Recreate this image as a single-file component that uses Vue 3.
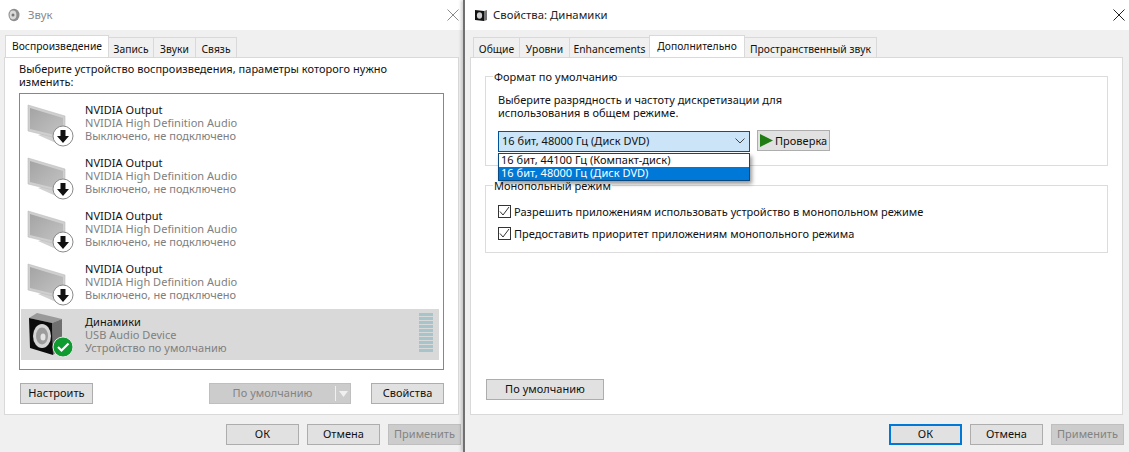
<script setup>
const leftTabs = [
  { label: 'Воспроизведение', width: 104, active: true },
  { label: 'Запись', width: 46 },
  { label: 'Звуки', width: 43 },
  { label: 'Связь', width: 42 },
]
const rightTabs = [
  { label: 'Общие', width: 47 },
  { label: 'Уровни', width: 51 },
  { label: 'Enhancements', width: 81 },
  { label: 'Дополнительно', width: 96, active: true },
  { label: 'Пространственный звук', width: 133 },
]
const devices = [
  { name: 'NVIDIA Output', sub: 'NVIDIA High Definition Audio', state: 'Выключено, не подключено' },
  { name: 'NVIDIA Output', sub: 'NVIDIA High Definition Audio', state: 'Выключено, не подключено' },
  { name: 'NVIDIA Output', sub: 'NVIDIA High Definition Audio', state: 'Выключено, не подключено' },
  { name: 'NVIDIA Output', sub: 'NVIDIA High Definition Audio', state: 'Выключено, не подключено' },
  { name: 'Динамики', sub: 'USB Audio Device', state: 'Устройство по умолчанию', selected: true },
]
const formats = ['16 бит, 44100 Гц (Компакт-диск)', '16 бит, 48000 Гц (Диск DVD)']
const checks = [
  'Разрешить приложениям использовать устройство в монопольном режиме',
  'Предоставить приоритет приложениям монопольного режима',
]
</script>

<template>
  <div class="desk">
    <section class="win win-left">
      <header class="title">
        <svg class="title-ico" width="14" height="14" viewBox="0 0 14 14">
          <ellipse cx="7" cy="7" rx="5.500" ry="6.200" fill="#8d8d8d" />
          <ellipse cx="6" cy="7" rx="3.400" ry="4.400" fill="#d9d9d9" />
          <circle cx="6" cy="7" r="1.500" fill="#777" />
        </svg>
        <span class="title-text muted">Звук</span>
        <svg class="close" width="12" height="12" viewBox="0 0 12 12"><path d="M.5.500l11 11M11.500.500l-11 11" stroke="#8a8a8a" fill="none" /></svg>
      </header>
      <div class="body">
        <nav class="tabs">
          <span v-for="t in leftTabs" :key="t.label" class="tab" :class="{ active: t.active }" :style="{ width: t.width + 'px' }">{{ t.label }}</span>
        </nav>
        <div class="panel panel-left">
          <p class="intro">Выберите устройство воспроизведения, параметры которого нужно изменить:</p>
          <div class="list">
            <div v-for="(d, i) in devices" :key="i" class="row" :class="{ selected: d.selected }">
              <svg class="dev-ico" width="60" height="51" viewBox="0 0 60 51">
                <defs>
                  <linearGradient :id="'s' + i" x1="0" y1="0" x2="1" y2="1">
                    <stop offset="0" stop-color="#a4a4a4" />
                    <stop offset="1" stop-color="#c4c4c4" />
                  </linearGradient>
                </defs>
                <template v-if="!d.selected">
                  <path d="M17 38l7-2 18 5v3l-7 2z" fill="#d2d2d2" />
                  <path d="M7 8l37 11v24L7 34z" fill="#cfcfcf" stroke="#bdbdbd" stroke-width=".6" />
                  <path d="M9 11l33 10v19L9 32z" :fill="'url(#s' + i + ')'" />
                  <circle cx="42" cy="39" r="10" fill="#fff" stroke="#8a8a8a" />
                  <path d="M39.500 33h5v6h3.500L42 46l-6-7h3.500z" fill="#111" />
                </template>
                <template v-else>
                  <path d="M8 9l8-5 25 6-10 4z" fill="#9a9a9a" />
                  <path d="M31 14l10-4v28l-9 8z" fill="#6f6f6f" />
                  <path d="M8 9l23 5 1 32-23-7z" fill="#0c0c0c" />
                  <ellipse cx="21" cy="27" rx="9" ry="12" fill="#d5d5d5" />
                  <ellipse cx="21" cy="27" rx="6" ry="8.500" fill="#9c9c9c" />
                  <ellipse cx="22" cy="28" rx="2.500" ry="3.500" fill="#e4e4e4" />
                  <circle cx="42" cy="38" r="10" fill="#0f9b2f" stroke="#e6e6e6" />
                  <path d="M37 38l3.500 3.500L47.500 34.500" stroke="#fff" stroke-width="2.200" fill="none" />
                </template>
              </svg>
              <div class="dev-text">
                <div class="dev-name">{{ d.name }}</div>
                <div class="dev-sub">{{ d.sub }}</div>
                <div class="dev-sub">{{ d.state }}</div>
              </div>
              <div v-if="d.selected" class="meter"><i v-for="n in 10" :key="n"></i></div>
            </div>
          </div>
          <div class="actions">
            <button class="btn w73">Настроить</button>
            <span class="split">
              <span class="split-main">По умолчанию</span>
              <span class="split-arrow"><svg width="9" height="6" viewBox="0 0 9 6"><path d="M0 0h9L4.500 6z" fill="#f0f0f0" /></svg></span>
            </span>
            <button class="btn w73">Свойства</button>
          </div>
        </div>
        <footer class="foot">
          <button class="btn w73">ОК</button>
          <button class="btn w73">Отмена</button>
          <button class="btn w73 disabled">Применить</button>
        </footer>
      </div>
    </section>

    <section class="win win-right">
      <header class="title">
        <svg class="title-ico" width="14" height="14" viewBox="0 0 14 14">
          <path d="M1 2l9 1v10l-9-1z" fill="#111" />
          <path d="M10 3l3-1v10l-3 1z" fill="#777" />
          <ellipse cx="5.500" cy="7.500" rx="2.600" ry="3.300" fill="#cfcfcf" />
        </svg>
        <span class="title-text">Свойства: Динамики</span>
        <svg class="close" width="12" height="12" viewBox="0 0 12 12"><path d="M.5.500l11 11M11.500.500l-11 11" stroke="#222" fill="none" /></svg>
      </header>
      <div class="body">
        <nav class="tabs">
          <span v-for="t in rightTabs" :key="t.label" class="tab" :class="{ active: t.active }" :style="{ width: t.width + 'px' }">{{ t.label }}</span>
        </nav>
        <div class="panel panel-right">
          <div class="group group-format">
            <div class="legend">Формат по умолчанию</div>
            <p class="hint">Выберите разрядность и частоту дискретизации для<br />использования в общем режиме.</p>
            <div class="format-row">
              <div class="combo-wrap">
                <div class="combo">
                  <span>{{ formats[1] }}</span>
                  <svg width="10" height="6" viewBox="0 0 10 6"><path d="M.5.500L5 5 9.500.5" stroke="#444" fill="none" /></svg>
                </div>
                <ul class="drop">
                  <li v-for="(f, i) in formats" :key="f" :class="{ picked: i === 1 }">{{ f }}</li>
                </ul>
              </div>
              <button class="btn test">
                <svg width="13" height="13" viewBox="0 0 13 13"><path d="M0 0l13 6.500L0 13z" fill="#1f7d14" /></svg>
                <span>Проверка</span>
              </button>
            </div>
          </div>
          <div class="group group-excl">
            <div class="legend">Монопольный режим</div>
            <label v-for="c in checks" :key="c" class="check">
              <span class="box"><svg width="11" height="11" viewBox="0 0 11 11"><path d="M1 5.500L4 9l6-8" stroke="#333" fill="none" /></svg></span>
              {{ c }}
            </label>
          </div>
          <button class="btn defaults">По умолчанию</button>
        </div>
        <footer class="foot">
          <button class="btn w73 primary">ОК</button>
          <button class="btn w73">Отмена</button>
          <button class="btn w73 disabled">Применить</button>
        </footer>
      </div>
    </section>
  </div>
</template>

<style scoped>
.desk {
  display: flex;
  width: 1129px;
  height: 452px;
  overflow: hidden;
  font: 11px/13px "Noto Sans", "Open Sans", sans-serif;
  letter-spacing: 0.03px;
  color: #111;
  background: #f0f0f0;
}
.win {
  display: flex;
  flex-direction: column;
  height: 452px;
}
.win-left {
  width: 463px;
  flex: none;
}
.win-right {
  flex: 1;
  border-left: 2px solid #707070;
  box-shadow: -2px 0 3px rgba(0, 0, 0, 0.18);
  position: relative;
}
.title {
  display: flex;
  align-items: center;
  height: 30px;
  flex: none;
  background: #fff;
  padding: 0 7px;
  font-size: 11.3px;
}
.win-right .title {
  padding-left: 9px;
}
.title-ico {
  margin-right: 5px;
}
.win-left .title-ico {
  margin-right: 7px;
}
.title-text {
  flex: 1;
  color: #222;
  padding-bottom: 2px;
}
.title-text.muted {
  color: #8a8a8a;
}
.close {
  margin-right: -3px;
}
.body {
  flex: 1;
  display: flex;
  flex-direction: column;
  padding: 7px 2px 7px 4px;
  min-height: 0;
}
.win-right .body {
  padding-left: 5px;
  padding-right: 5px;
}
.tabs {
  display: flex;
  height: 20px;
  flex: none;
  position: relative;
  z-index: 1;
  padding-left: 1px;
  font-size: 10.3px;
}
.win-right .tabs {
  padding-left: 3px;
}
.tab {
  display: block;
  height: 20px;
  padding: 5px 0 0;
  border: 1px solid #d9d9d9;
  border-bottom: 0;
  margin-right: -1px;
  box-sizing: border-box;
  white-space: nowrap;
  text-align: center;
  flex: none;
}
.tab.active {
  height: 22px;
  margin-top: -2px;
  background: #fff;
  padding-top: 4px;
  z-index: 1;
}
.panel {
  flex: 1;
  background: #fff;
  border: 1px solid #d9d9d9;
  box-sizing: border-box;
  display: flex;
  flex-direction: column;
  min-height: 0;
}
.panel-left {
  padding: 4px 14px 0;
  margin-right: 2px;
}
.intro {
  margin: 0 0 5px;
  width: 400px;
}
.list {
  height: 277px;
  box-sizing: border-box;
  border: 1px solid #828790;
  padding: 3px 4px 0 1px;
  flex: none;
}
.row {
  display: flex;
  height: 51px;
  margin-bottom: 2px;
  position: relative;
}
.row.selected {
  background: #d9d9d9;
}
.dev-ico {
  flex: none;
  margin-right: 4px;
}
.dev-text {
  padding-top: 6px;
  white-space: nowrap;
}
.dev-sub {
  color: #808080;
}
.meter {
  position: absolute;
  right: 6px;
  top: 4px;
  width: 14px;
  display: flex;
  flex-direction: column;
  gap: 1px;
}
.meter i {
  display: block;
  height: 3px;
  background: #a8c4cb;
}
.actions {
  display: flex;
  align-items: flex-start;
  margin-top: 13px;
  padding-left: 1px;
  gap: 20px;
}
.btn {
  font: inherit;
  letter-spacing: inherit;
  color: #111;
  height: 21px;
  padding: 0 0 2px;
  box-sizing: border-box;
  background: #e1e1e1;
  border: 1px solid #adadad;
  flex: none;
}
.w73 {
  width: 73px;
}
.split {
  display: flex;
  width: 142px;
  height: 21px;
  background: #ccc;
  color: #838383;
  margin-left: 96px;
  border: 1px solid #bfbfbf;
  box-sizing: border-box;
}
.split-main {
  flex: 1;
  text-align: center;
  line-height: 18px;
}
.split-arrow {
  width: 14px;
  display: flex;
  align-items: center;
  justify-content: center;
  border-left: 1px solid #f0f0f0;
  margin: 2px 0;
}
.foot {
  display: flex;
  justify-content: flex-end;
  gap: 8px;
  height: 21px;
  margin-top: 9px;
  flex: none;
}
.disabled {
  background: #ccc;
  color: #838383;
  border-color: #bfbfbf;
}
.primary {
  border: 2px solid #0078d7;
}
.panel-right {
  padding: 18px 14px 0;
  margin-right: 1px;
}
.group {
  border: 1px solid #dcdcdc;
  position: relative;
  box-sizing: border-box;
  flex: none;
  padding-left: 12px;
}
.legend {
  background: #fff;
  width: max-content;
  padding: 0 1px;
  margin: -7px 0 0 -5px;
  position: relative;
}
.group-format {
  height: 90px;
}
.group-excl {
  height: 68px;
  margin-top: 19px;
}
.hint {
  margin: 10px 0 12px;
}
.format-row {
  display: flex;
  gap: 7px;
  align-items: flex-start;
}
.combo-wrap {
  position: relative;
  width: 252px;
  z-index: 2;
}
.combo {
  height: 21px;
  box-sizing: border-box;
  display: flex;
  align-items: center;
  justify-content: space-between;
  padding: 0 4px 2px 3px;
  background: #cce4f7;
  border: 1px solid #005499;
}
.drop {
  position: absolute;
  left: 0;
  right: 0;
  top: 22px;
  margin: 0;
  padding: 0;
  list-style: none;
  background: #fff;
  border: 1px solid #0a4a80;
  box-sizing: border-box;
  box-shadow: 2px 3px 4px rgba(0, 0, 0, 0.4);
}
.drop li {
  height: 13px;
  line-height: 11px;
  padding: 0 2px;
  white-space: nowrap;
}
.drop li.picked {
  background: #0078d7;
  color: #fff;
}
.test {
  width: 73px;
  margin-top: -1px;
  display: flex;
  align-items: center;
  gap: 2px;
  padding: 0 0 0 2px;
}
.check {
  display: flex;
  align-items: center;
  gap: 3px;
  height: 13px;
  margin-top: 9px;
  white-space: nowrap;
}
.check:first-of-type {
  margin-top: 13px;
}
.box {
  width: 13px;
  height: 13px;
  box-sizing: border-box;
  border: 1px solid #333;
  background: #fff;
  display: flex;
  flex: none;
}
.defaults {
  width: 118px;
  margin-top: auto;
  margin-bottom: 14px;
  margin-left: 1px;
}
</style>
